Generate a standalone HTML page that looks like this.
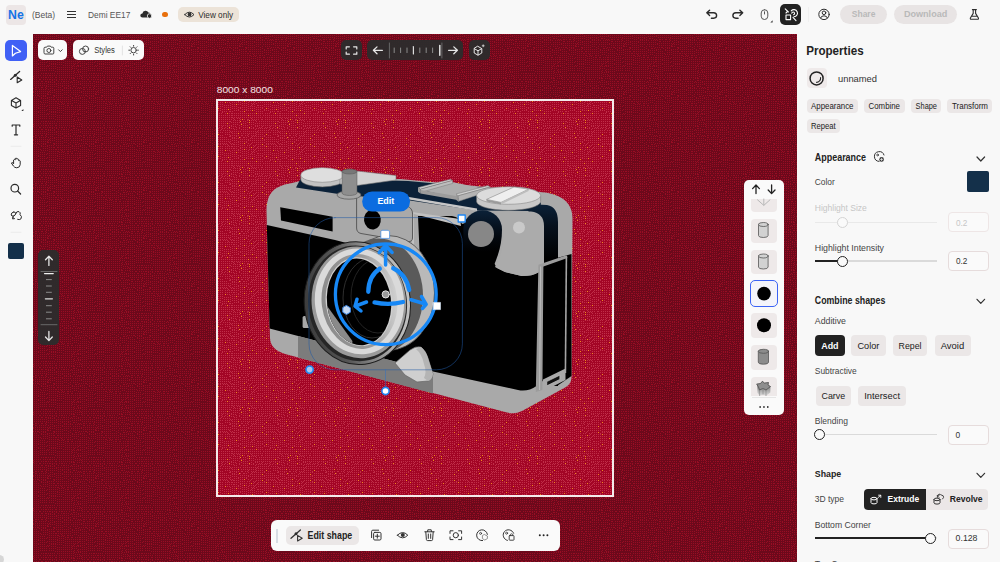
<!DOCTYPE html>
<html><head><meta charset="utf-8"><title>Ne (Beta)</title>
<style>
*{box-sizing:border-box;margin:0;padding:0}
html,body{width:1000px;height:562px;overflow:hidden;background:#f8f8f8;font-family:"Liberation Sans",sans-serif;color:#222}
#top{position:absolute;left:0;top:0;width:1000px;height:34.4px;background:#f8f8f8}
#left{position:absolute;left:0;top:34px;width:33.1px;height:528px;background:#f8f8f8}
#canvas{position:absolute;left:33.1px;top:34.4px;width:764px;height:528px;background:#820c22;overflow:hidden}
#right{position:absolute;left:797px;top:34.4px;width:203px;height:528px;background:#f8f8f8}
.box{position:absolute}
svg{position:absolute;left:0;top:0;overflow:visible}
svg text{font-family:"Liberation Sans",sans-serif;white-space:pre}
</style></head><body>
<div id="top"></div><div id="left"></div><div id="canvas"></div><div id="right"></div>
<svg id="bg" width="1000" height="562" viewBox="0 0 1000 562" shape-rendering="crispEdges">
<defs>
<pattern id="pBg" width="48" height="48" patternUnits="userSpaceOnUse"><rect width="48" height="48" fill="#6c091b"/><path d="M0 18h1v1h-1zM0 25h1v1h-1zM0 29h1v1h-1zM0 33h1v1h-1zM0 34h1v1h-1zM0 36h1v1h-1zM0 38h1v1h-1zM0 41h1v1h-1zM0 44h1v1h-1zM0 46h1v1h-1zM1 1h1v1h-1zM1 3h1v1h-1zM1 5h1v1h-1zM1 7h1v1h-1zM1 9h1v1h-1zM1 11h1v1h-1zM1 13h1v1h-1zM1 15h1v1h-1zM1 17h1v1h-1zM1 20h1v1h-1zM1 22h1v1h-1zM1 27h1v1h-1zM1 31h1v1h-1zM1 43h1v1h-1zM2 25h1v1h-1zM2 27h1v1h-1zM2 29h1v1h-1zM2 31h1v1h-1zM2 33h1v1h-1zM2 34h1v1h-1zM2 36h1v1h-1zM2 38h1v1h-1zM2 40h1v1h-1zM2 42h1v1h-1zM2 44h1v1h-1zM2 46h1v1h-1zM3 1h1v1h-1zM3 3h1v1h-1zM3 5h1v1h-1zM3 7h1v1h-1zM3 9h1v1h-1zM3 11h1v1h-1zM3 13h1v1h-1zM3 15h1v1h-1zM3 16h1v1h-1zM3 18h1v1h-1zM3 20h1v1h-1zM3 22h1v1h-1zM4 25h1v1h-1zM4 27h1v1h-1zM4 29h1v1h-1zM4 31h1v1h-1zM4 32h1v1h-1zM4 34h1v1h-1zM4 36h1v1h-1zM4 38h1v1h-1zM4 40h1v1h-1zM4 42h1v1h-1zM4 44h1v1h-1zM5 1h1v1h-1zM5 3h1v1h-1zM5 5h1v1h-1zM5 7h1v1h-1zM5 9h1v1h-1zM5 11h1v1h-1zM5 13h1v1h-1zM5 15h1v1h-1zM5 16h1v1h-1zM5 18h1v1h-1zM5 20h1v1h-1zM5 22h1v1h-1zM5 47h1v1h-1zM6 0h1v1h-1zM6 3h1v1h-1zM6 25h1v1h-1zM6 27h1v1h-1zM6 31h1v1h-1zM6 33h1v1h-1zM6 34h1v1h-1zM6 36h1v1h-1zM6 38h1v1h-1zM6 41h1v1h-1zM6 42h1v1h-1zM6 44h1v1h-1zM6 47h1v1h-1zM7 5h1v1h-1zM7 7h1v1h-1zM7 9h1v1h-1zM7 11h1v1h-1zM7 13h1v1h-1zM7 15h1v1h-1zM7 16h1v1h-1zM7 18h1v1h-1zM7 20h1v1h-1zM7 23h1v1h-1zM7 29h1v1h-1zM8 1h1v1h-1zM8 5h1v1h-1zM8 27h1v1h-1zM8 29h1v1h-1zM8 31h1v1h-1zM8 32h1v1h-1zM8 35h1v1h-1zM8 36h1v1h-1zM8 38h1v1h-1zM8 41h1v1h-1zM8 43h1v1h-1zM8 45h1v1h-1zM8 47h1v1h-1zM9 3h1v1h-1zM9 7h1v1h-1zM9 9h1v1h-1zM9 11h1v1h-1zM9 12h1v1h-1zM9 14h1v1h-1zM9 16h1v1h-1zM9 19h1v1h-1zM9 21h1v1h-1zM9 23h1v1h-1zM9 25h1v1h-1zM10 1h1v1h-1zM10 3h1v1h-1zM10 5h1v1h-1zM10 7h1v1h-1zM10 33h1v1h-1zM10 35h1v1h-1zM10 37h1v1h-1zM10 39h1v1h-1zM10 41h1v1h-1zM10 43h1v1h-1zM10 45h1v1h-1zM10 47h1v1h-1zM11 8h1v1h-1zM11 10h1v1h-1zM11 12h1v1h-1zM11 14h1v1h-1zM11 16h1v1h-1zM11 19h1v1h-1zM11 21h1v1h-1zM11 23h1v1h-1zM11 25h1v1h-1zM11 27h1v1h-1zM11 29h1v1h-1zM11 31h1v1h-1zM12 1h1v1h-1zM12 3h1v1h-1zM12 5h1v1h-1zM12 35h1v1h-1zM12 37h1v1h-1zM12 39h1v1h-1zM12 41h1v1h-1zM12 43h1v1h-1zM12 45h1v1h-1zM12 47h1v1h-1zM13 6h1v1h-1zM13 8h1v1h-1zM13 10h1v1h-1zM13 12h1v1h-1zM13 14h1v1h-1zM13 16h1v1h-1zM13 19h1v1h-1zM13 21h1v1h-1zM13 23h1v1h-1zM13 25h1v1h-1zM13 27h1v1h-1zM13 29h1v1h-1zM13 31h1v1h-1zM13 33h1v1h-1zM14 1h1v1h-1zM14 3h1v1h-1zM14 5h1v1h-1zM14 7h1v1h-1zM14 31h1v1h-1zM14 35h1v1h-1zM14 37h1v1h-1zM14 38h1v1h-1zM14 41h1v1h-1zM14 42h1v1h-1zM14 45h1v1h-1zM14 47h1v1h-1zM15 8h1v1h-1zM15 10h1v1h-1zM15 12h1v1h-1zM15 14h1v1h-1zM15 17h1v1h-1zM15 19h1v1h-1zM15 21h1v1h-1zM15 23h1v1h-1zM15 25h1v1h-1zM15 27h1v1h-1zM15 29h1v1h-1zM15 33h1v1h-1zM16 1h1v1h-1zM16 3h1v1h-1zM16 5h1v1h-1zM16 7h1v1h-1zM16 31h1v1h-1zM16 33h1v1h-1zM16 35h1v1h-1zM16 37h1v1h-1zM16 39h1v1h-1zM16 40h1v1h-1zM16 42h1v1h-1zM16 44h1v1h-1zM16 46h1v1h-1zM17 9h1v1h-1zM17 11h1v1h-1zM17 13h1v1h-1zM17 15h1v1h-1zM17 17h1v1h-1zM17 19h1v1h-1zM17 21h1v1h-1zM17 23h1v1h-1zM17 25h1v1h-1zM17 27h1v1h-1zM17 29h1v1h-1zM18 1h1v1h-1zM18 3h1v1h-1zM18 5h1v1h-1zM18 31h1v1h-1zM18 33h1v1h-1zM18 35h1v1h-1zM18 37h1v1h-1zM18 39h1v1h-1zM18 40h1v1h-1zM18 42h1v1h-1zM18 44h1v1h-1zM18 46h1v1h-1zM19 7h1v1h-1zM19 9h1v1h-1zM19 11h1v1h-1zM19 13h1v1h-1zM19 15h1v1h-1zM19 17h1v1h-1zM19 19h1v1h-1zM19 21h1v1h-1zM19 23h1v1h-1zM19 25h1v1h-1zM19 27h1v1h-1zM19 29h1v1h-1zM20 1h1v1h-1zM20 3h1v1h-1zM20 5h1v1h-1zM20 7h1v1h-1zM20 9h1v1h-1zM20 33h1v1h-1zM20 35h1v1h-1zM20 37h1v1h-1zM20 38h1v1h-1zM20 40h1v1h-1zM20 42h1v1h-1zM20 44h1v1h-1zM20 47h1v1h-1zM21 11h1v1h-1zM21 13h1v1h-1zM21 15h1v1h-1zM21 17h1v1h-1zM21 19h1v1h-1zM21 21h1v1h-1zM21 23h1v1h-1zM21 25h1v1h-1zM21 27h1v1h-1zM21 29h1v1h-1zM21 31h1v1h-1zM22 0h1v1h-1zM22 3h1v1h-1zM22 5h1v1h-1zM22 7h1v1h-1zM22 34h1v1h-1zM22 37h1v1h-1zM22 39h1v1h-1zM22 40h1v1h-1zM22 42h1v1h-1zM22 46h1v1h-1zM23 9h1v1h-1zM23 11h1v1h-1zM23 13h1v1h-1zM23 15h1v1h-1zM23 17h1v1h-1zM23 19h1v1h-1zM23 21h1v1h-1zM23 23h1v1h-1zM23 25h1v1h-1zM23 27h1v1h-1zM23 29h1v1h-1zM23 30h1v1h-1zM23 33h1v1h-1zM23 44h1v1h-1zM24 1h1v1h-1zM24 2h1v1h-1zM24 4h1v1h-1zM24 7h1v1h-1zM24 9h1v1h-1zM24 18h1v1h-1zM24 20h1v1h-1zM24 34h1v1h-1zM24 36h1v1h-1zM24 40h1v1h-1zM25 11h1v1h-1zM25 13h1v1h-1zM25 15h1v1h-1zM25 17h1v1h-1zM25 23h1v1h-1zM25 25h1v1h-1zM25 27h1v1h-1zM25 29h1v1h-1zM25 30h1v1h-1zM25 32h1v1h-1zM25 38h1v1h-1zM25 42h1v1h-1zM25 44h1v1h-1zM25 46h1v1h-1zM26 2h1v1h-1zM26 4h1v1h-1zM26 6h1v1h-1zM26 16h1v1h-1zM26 18h1v1h-1zM26 20h1v1h-1zM26 22h1v1h-1zM26 24h1v1h-1zM26 30h1v1h-1zM26 32h1v1h-1zM26 34h1v1h-1zM26 36h1v1h-1zM26 38h1v1h-1zM27 0h1v1h-1zM27 9h1v1h-1zM27 11h1v1h-1zM27 13h1v1h-1zM27 15h1v1h-1zM27 26h1v1h-1zM27 28h1v1h-1zM27 40h1v1h-1zM27 42h1v1h-1zM27 44h1v1h-1zM27 46h1v1h-1zM28 0h1v1h-1zM28 2h1v1h-1zM28 4h1v1h-1zM28 6h1v1h-1zM28 18h1v1h-1zM28 20h1v1h-1zM28 24h1v1h-1zM28 32h1v1h-1zM28 34h1v1h-1zM28 36h1v1h-1zM28 38h1v1h-1zM29 9h1v1h-1zM29 11h1v1h-1zM29 13h1v1h-1zM29 15h1v1h-1zM29 17h1v1h-1zM29 22h1v1h-1zM29 26h1v1h-1zM29 28h1v1h-1zM29 30h1v1h-1zM29 40h1v1h-1zM29 42h1v1h-1zM29 44h1v1h-1zM29 46h1v1h-1zM30 0h1v1h-1zM30 2h1v1h-1zM30 4h1v1h-1zM30 7h1v1h-1zM30 14h1v1h-1zM30 17h1v1h-1zM30 18h1v1h-1zM30 21h1v1h-1zM30 23h1v1h-1zM30 24h1v1h-1zM30 33h1v1h-1zM30 34h1v1h-1zM30 36h1v1h-1zM30 39h1v1h-1zM31 9h1v1h-1zM31 11h1v1h-1zM31 13h1v1h-1zM31 26h1v1h-1zM31 28h1v1h-1zM31 30h1v1h-1zM31 40h1v1h-1zM31 42h1v1h-1zM31 44h1v1h-1zM31 47h1v1h-1zM32 1h1v1h-1zM32 2h1v1h-1zM32 5h1v1h-1zM32 7h1v1h-1zM32 9h1v1h-1zM32 11h1v1h-1zM32 13h1v1h-1zM32 15h1v1h-1zM32 17h1v1h-1zM32 18h1v1h-1zM32 21h1v1h-1zM32 23h1v1h-1zM32 24h1v1h-1zM32 27h1v1h-1zM32 33h1v1h-1zM32 35h1v1h-1zM32 36h1v1h-1zM32 39h1v1h-1zM33 28h1v1h-1zM33 30h1v1h-1zM33 40h1v1h-1zM33 43h1v1h-1zM33 44h1v1h-1zM33 47h1v1h-1zM34 1h1v1h-1zM34 3h1v1h-1zM34 5h1v1h-1zM34 7h1v1h-1zM34 9h1v1h-1zM34 11h1v1h-1zM34 13h1v1h-1zM34 15h1v1h-1zM34 17h1v1h-1zM34 19h1v1h-1zM34 21h1v1h-1zM34 23h1v1h-1zM34 25h1v1h-1zM34 27h1v1h-1zM34 29h1v1h-1zM34 31h1v1h-1zM34 33h1v1h-1zM34 35h1v1h-1zM34 37h1v1h-1zM35 39h1v1h-1zM35 41h1v1h-1zM35 43h1v1h-1zM35 45h1v1h-1zM35 47h1v1h-1zM36 1h1v1h-1zM36 3h1v1h-1zM36 5h1v1h-1zM36 7h1v1h-1zM36 9h1v1h-1zM36 11h1v1h-1zM36 13h1v1h-1zM36 15h1v1h-1zM36 17h1v1h-1zM36 19h1v1h-1zM36 21h1v1h-1zM36 23h1v1h-1zM36 25h1v1h-1zM36 27h1v1h-1zM36 29h1v1h-1zM36 31h1v1h-1zM36 33h1v1h-1zM36 35h1v1h-1zM36 37h1v1h-1zM36 39h1v1h-1zM36 41h1v1h-1zM37 43h1v1h-1zM37 45h1v1h-1zM37 47h1v1h-1zM38 3h1v1h-1zM38 5h1v1h-1zM38 7h1v1h-1zM38 9h1v1h-1zM38 11h1v1h-1zM38 12h1v1h-1zM38 15h1v1h-1zM38 16h1v1h-1zM38 19h1v1h-1zM38 21h1v1h-1zM38 23h1v1h-1zM38 25h1v1h-1zM38 27h1v1h-1zM38 29h1v1h-1zM38 33h1v1h-1zM38 35h1v1h-1zM38 37h1v1h-1zM38 39h1v1h-1zM38 47h1v1h-1zM39 0h1v1h-1zM39 31h1v1h-1zM39 41h1v1h-1zM39 43h1v1h-1zM39 45h1v1h-1zM40 5h1v1h-1zM40 8h1v1h-1zM40 10h1v1h-1zM40 12h1v1h-1zM40 14h1v1h-1zM40 16h1v1h-1zM40 18h1v1h-1zM40 20h1v1h-1zM40 22h1v1h-1zM40 27h1v1h-1zM40 31h1v1h-1zM40 35h1v1h-1zM40 37h1v1h-1zM41 1h1v1h-1zM41 2h1v1h-1zM41 6h1v1h-1zM41 25h1v1h-1zM41 29h1v1h-1zM41 33h1v1h-1zM41 39h1v1h-1zM41 41h1v1h-1zM41 43h1v1h-1zM41 45h1v1h-1zM41 47h1v1h-1zM42 8h1v1h-1zM42 10h1v1h-1zM42 12h1v1h-1zM42 14h1v1h-1zM42 16h1v1h-1zM42 18h1v1h-1zM42 20h1v1h-1zM42 22h1v1h-1zM42 33h1v1h-1zM42 35h1v1h-1zM42 37h1v1h-1zM42 39h1v1h-1zM43 0h1v1h-1zM43 2h1v1h-1zM43 4h1v1h-1zM43 6h1v1h-1zM43 25h1v1h-1zM43 27h1v1h-1zM43 29h1v1h-1zM43 31h1v1h-1zM43 41h1v1h-1zM43 43h1v1h-1zM43 45h1v1h-1zM43 47h1v1h-1zM44 8h1v1h-1zM44 10h1v1h-1zM44 12h1v1h-1zM44 14h1v1h-1zM44 16h1v1h-1zM44 18h1v1h-1zM44 20h1v1h-1zM44 22h1v1h-1zM44 35h1v1h-1zM44 37h1v1h-1zM45 0h1v1h-1zM45 2h1v1h-1zM45 4h1v1h-1zM45 6h1v1h-1zM45 25h1v1h-1zM45 27h1v1h-1zM45 29h1v1h-1zM45 31h1v1h-1zM45 33h1v1h-1zM45 39h1v1h-1zM45 41h1v1h-1zM45 43h1v1h-1zM45 45h1v1h-1zM45 47h1v1h-1zM46 10h1v1h-1zM46 14h1v1h-1zM46 18h1v1h-1zM46 20h1v1h-1zM46 22h1v1h-1zM46 25h1v1h-1zM46 29h1v1h-1zM46 33h1v1h-1zM46 35h1v1h-1zM46 37h1v1h-1zM46 38h1v1h-1zM46 40h1v1h-1zM47 1h1v1h-1zM47 2h1v1h-1zM47 4h1v1h-1zM47 6h1v1h-1zM47 9h1v1h-1zM47 13h1v1h-1zM47 17h1v1h-1zM47 27h1v1h-1zM47 31h1v1h-1zM47 43h1v1h-1zM47 45h1v1h-1zM47 46h1v1h-1z" fill="#980d24"/></pattern>
<pattern id="pArt" width="48" height="48" patternUnits="userSpaceOnUse"><rect width="48" height="48" fill="#a30525"/><path d="M0 1h1v1h-1zM0 3h1v1h-1zM0 4h1v1h-1zM0 6h1v1h-1zM0 8h1v1h-1zM0 11h1v1h-1zM0 12h1v1h-1zM0 15h1v1h-1zM0 17h1v1h-1zM0 19h1v1h-1zM0 21h1v1h-1zM0 23h1v1h-1zM0 35h1v1h-1zM0 41h1v1h-1zM0 43h1v1h-1zM0 45h1v1h-1zM0 47h1v1h-1zM1 27h1v1h-1zM1 30h1v1h-1zM1 33h1v1h-1zM1 37h1v1h-1zM1 39h1v1h-1zM2 1h1v1h-1zM2 3h1v1h-1zM2 5h1v1h-1zM2 7h1v1h-1zM2 9h1v1h-1zM2 11h1v1h-1zM2 13h1v1h-1zM2 15h1v1h-1zM2 17h1v1h-1zM2 19h1v1h-1zM2 21h1v1h-1zM2 39h1v1h-1zM2 43h1v1h-1zM2 45h1v1h-1zM2 47h1v1h-1zM3 25h1v1h-1zM3 27h1v1h-1zM3 29h1v1h-1zM3 31h1v1h-1zM3 33h1v1h-1zM3 35h1v1h-1zM3 37h1v1h-1zM3 41h1v1h-1zM4 1h1v1h-1zM4 3h1v1h-1zM4 7h1v1h-1zM4 9h1v1h-1zM4 11h1v1h-1zM4 13h1v1h-1zM4 17h1v1h-1zM4 19h1v1h-1zM4 21h1v1h-1zM4 23h1v1h-1zM4 41h1v1h-1zM4 43h1v1h-1zM4 45h1v1h-1zM5 25h1v1h-1zM5 27h1v1h-1zM5 29h1v1h-1zM5 31h1v1h-1zM5 33h1v1h-1zM5 35h1v1h-1zM5 37h1v1h-1zM5 39h1v1h-1zM6 3h1v1h-1zM6 5h1v1h-1zM6 7h1v1h-1zM6 9h1v1h-1zM6 11h1v1h-1zM6 13h1v1h-1zM6 14h1v1h-1zM6 17h1v1h-1zM6 19h1v1h-1zM6 21h1v1h-1zM6 41h1v1h-1zM6 43h1v1h-1zM6 45h1v1h-1zM6 46h1v1h-1zM7 1h1v1h-1zM7 23h1v1h-1zM7 24h1v1h-1zM7 26h1v1h-1zM7 29h1v1h-1zM7 31h1v1h-1zM7 33h1v1h-1zM7 35h1v1h-1zM7 37h1v1h-1zM7 39h1v1h-1zM8 6h1v1h-1zM8 8h1v1h-1zM8 10h1v1h-1zM8 12h1v1h-1zM8 14h1v1h-1zM8 17h1v1h-1zM8 21h1v1h-1zM8 23h1v1h-1zM8 38h1v1h-1zM8 40h1v1h-1zM8 43h1v1h-1zM8 44h1v1h-1zM8 47h1v1h-1zM9 1h1v1h-1zM9 3h1v1h-1zM9 5h1v1h-1zM9 28h1v1h-1zM9 32h1v1h-1zM9 35h1v1h-1zM9 37h1v1h-1zM10 0h1v1h-1zM10 10h1v1h-1zM10 12h1v1h-1zM10 14h1v1h-1zM10 17h1v1h-1zM10 19h1v1h-1zM10 21h1v1h-1zM10 42h1v1h-1zM10 44h1v1h-1zM11 5h1v1h-1zM11 7h1v1h-1zM11 9h1v1h-1zM11 22h1v1h-1zM11 24h1v1h-1zM11 26h1v1h-1zM11 28h1v1h-1zM11 30h1v1h-1zM11 32h1v1h-1zM11 35h1v1h-1zM11 37h1v1h-1zM11 39h1v1h-1zM11 41h1v1h-1zM11 47h1v1h-1zM12 8h1v1h-1zM12 10h1v1h-1zM12 12h1v1h-1zM12 17h1v1h-1zM12 19h1v1h-1zM12 21h1v1h-1zM12 23h1v1h-1zM12 40h1v1h-1zM12 42h1v1h-1zM12 44h1v1h-1zM12 46h1v1h-1zM13 1h1v1h-1zM13 3h1v1h-1zM13 5h1v1h-1zM13 7h1v1h-1zM13 24h1v1h-1zM13 26h1v1h-1zM13 28h1v1h-1zM13 31h1v1h-1zM13 32h1v1h-1zM13 35h1v1h-1zM13 37h1v1h-1zM13 39h1v1h-1zM14 2h1v1h-1zM14 6h1v1h-1zM14 8h1v1h-1zM14 10h1v1h-1zM14 12h1v1h-1zM14 14h1v1h-1zM14 17h1v1h-1zM14 19h1v1h-1zM14 21h1v1h-1zM14 23h1v1h-1zM14 40h1v1h-1zM14 42h1v1h-1zM14 44h1v1h-1zM14 46h1v1h-1zM15 1h1v1h-1zM15 5h1v1h-1zM15 24h1v1h-1zM15 27h1v1h-1zM15 29h1v1h-1zM15 30h1v1h-1zM15 33h1v1h-1zM15 35h1v1h-1zM15 37h1v1h-1zM15 39h1v1h-1zM16 0h1v1h-1zM16 4h1v1h-1zM16 7h1v1h-1zM16 11h1v1h-1zM16 13h1v1h-1zM16 15h1v1h-1zM16 19h1v1h-1zM16 21h1v1h-1zM16 23h1v1h-1zM16 25h1v1h-1zM16 32h1v1h-1zM16 36h1v1h-1zM16 38h1v1h-1zM16 40h1v1h-1zM16 42h1v1h-1zM16 44h1v1h-1zM16 46h1v1h-1zM17 3h1v1h-1zM17 9h1v1h-1zM17 27h1v1h-1zM17 29h1v1h-1zM17 30h1v1h-1zM17 35h1v1h-1zM18 0h1v1h-1zM18 2h1v1h-1zM18 4h1v1h-1zM18 6h1v1h-1zM18 9h1v1h-1zM18 11h1v1h-1zM18 13h1v1h-1zM18 15h1v1h-1zM18 17h1v1h-1zM18 19h1v1h-1zM18 21h1v1h-1zM18 23h1v1h-1zM18 32h1v1h-1zM18 34h1v1h-1zM18 36h1v1h-1zM18 38h1v1h-1zM18 40h1v1h-1zM18 42h1v1h-1zM18 44h1v1h-1zM18 46h1v1h-1zM19 25h1v1h-1zM19 27h1v1h-1zM19 29h1v1h-1zM19 31h1v1h-1zM20 0h1v1h-1zM20 2h1v1h-1zM20 4h1v1h-1zM20 6h1v1h-1zM20 9h1v1h-1zM20 11h1v1h-1zM20 13h1v1h-1zM20 15h1v1h-1zM20 17h1v1h-1zM20 19h1v1h-1zM20 21h1v1h-1zM20 32h1v1h-1zM20 34h1v1h-1zM20 36h1v1h-1zM20 38h1v1h-1zM20 40h1v1h-1zM20 42h1v1h-1zM20 44h1v1h-1zM20 46h1v1h-1zM21 23h1v1h-1zM21 25h1v1h-1zM21 27h1v1h-1zM21 29h1v1h-1zM21 31h1v1h-1zM22 2h1v1h-1zM22 4h1v1h-1zM22 6h1v1h-1zM22 9h1v1h-1zM22 11h1v1h-1zM22 12h1v1h-1zM22 15h1v1h-1zM22 17h1v1h-1zM22 21h1v1h-1zM22 23h1v1h-1zM22 30h1v1h-1zM22 32h1v1h-1zM22 34h1v1h-1zM22 36h1v1h-1zM22 38h1v1h-1zM22 40h1v1h-1zM22 44h1v1h-1zM22 46h1v1h-1zM23 19h1v1h-1zM23 25h1v1h-1zM23 27h1v1h-1zM23 29h1v1h-1zM24 1h1v1h-1zM24 2h1v1h-1zM24 4h1v1h-1zM24 6h1v1h-1zM24 8h1v1h-1zM24 10h1v1h-1zM24 13h1v1h-1zM24 14h1v1h-1zM24 32h1v1h-1zM24 34h1v1h-1zM24 36h1v1h-1zM24 39h1v1h-1zM24 40h1v1h-1zM24 43h1v1h-1zM24 44h1v1h-1zM24 46h1v1h-1zM25 17h1v1h-1zM25 19h1v1h-1zM25 21h1v1h-1zM25 23h1v1h-1zM25 25h1v1h-1zM25 27h1v1h-1zM25 29h1v1h-1zM25 31h1v1h-1zM26 0h1v1h-1zM26 4h1v1h-1zM26 6h1v1h-1zM26 8h1v1h-1zM26 10h1v1h-1zM26 14h1v1h-1zM26 32h1v1h-1zM26 34h1v1h-1zM26 36h1v1h-1zM26 41h1v1h-1zM26 43h1v1h-1zM26 45h1v1h-1zM26 47h1v1h-1zM27 17h1v1h-1zM27 19h1v1h-1zM27 21h1v1h-1zM27 23h1v1h-1zM27 25h1v1h-1zM27 27h1v1h-1zM27 29h1v1h-1zM27 31h1v1h-1zM28 0h1v1h-1zM28 2h1v1h-1zM28 4h1v1h-1zM28 6h1v1h-1zM28 8h1v1h-1zM28 10h1v1h-1zM28 12h1v1h-1zM28 14h1v1h-1zM28 34h1v1h-1zM28 36h1v1h-1zM28 39h1v1h-1zM28 41h1v1h-1zM28 43h1v1h-1zM28 45h1v1h-1zM28 47h1v1h-1zM29 17h1v1h-1zM29 19h1v1h-1zM29 21h1v1h-1zM29 23h1v1h-1zM29 25h1v1h-1zM29 27h1v1h-1zM29 29h1v1h-1zM29 31h1v1h-1zM29 33h1v1h-1zM30 2h1v1h-1zM30 4h1v1h-1zM30 6h1v1h-1zM30 8h1v1h-1zM30 10h1v1h-1zM30 13h1v1h-1zM30 15h1v1h-1zM30 16h1v1h-1zM30 30h1v1h-1zM30 32h1v1h-1zM30 36h1v1h-1zM30 39h1v1h-1zM30 41h1v1h-1zM30 43h1v1h-1zM30 45h1v1h-1zM30 47h1v1h-1zM31 0h1v1h-1zM31 19h1v1h-1zM31 21h1v1h-1zM31 23h1v1h-1zM31 25h1v1h-1zM31 27h1v1h-1zM31 29h1v1h-1zM31 34h1v1h-1zM32 9h1v1h-1zM32 11h1v1h-1zM32 13h1v1h-1zM32 15h1v1h-1zM32 32h1v1h-1zM32 41h1v1h-1zM32 43h1v1h-1zM32 45h1v1h-1zM32 47h1v1h-1zM33 0h1v1h-1zM33 2h1v1h-1zM33 4h1v1h-1zM33 17h1v1h-1zM33 19h1v1h-1zM33 21h1v1h-1zM33 23h1v1h-1zM33 25h1v1h-1zM33 27h1v1h-1zM33 29h1v1h-1zM33 31h1v1h-1zM33 34h1v1h-1zM33 36h1v1h-1zM33 38h1v1h-1zM34 9h1v1h-1zM34 11h1v1h-1zM34 13h1v1h-1zM34 15h1v1h-1zM34 41h1v1h-1zM34 43h1v1h-1zM34 45h1v1h-1zM34 47h1v1h-1zM35 0h1v1h-1zM35 2h1v1h-1zM35 4h1v1h-1zM35 6h1v1h-1zM35 19h1v1h-1zM35 21h1v1h-1zM35 23h1v1h-1zM35 25h1v1h-1zM35 29h1v1h-1zM35 30h1v1h-1zM35 32h1v1h-1zM35 34h1v1h-1zM35 36h1v1h-1zM35 38h1v1h-1zM36 1h1v1h-1zM36 9h1v1h-1zM36 11h1v1h-1zM36 43h1v1h-1zM36 45h1v1h-1zM37 2h1v1h-1zM37 4h1v1h-1zM37 6h1v1h-1zM37 15h1v1h-1zM37 17h1v1h-1zM37 19h1v1h-1zM37 21h1v1h-1zM37 23h1v1h-1zM37 25h1v1h-1zM37 27h1v1h-1zM37 29h1v1h-1zM37 32h1v1h-1zM37 34h1v1h-1zM37 36h1v1h-1zM37 38h1v1h-1zM37 40h1v1h-1zM37 46h1v1h-1zM38 7h1v1h-1zM38 9h1v1h-1zM38 11h1v1h-1zM38 13h1v1h-1zM38 15h1v1h-1zM38 25h1v1h-1zM38 35h1v1h-1zM38 39h1v1h-1zM38 40h1v1h-1zM38 43h1v1h-1zM38 45h1v1h-1zM38 47h1v1h-1zM39 0h1v1h-1zM39 2h1v1h-1zM39 4h1v1h-1zM39 17h1v1h-1zM39 19h1v1h-1zM39 21h1v1h-1zM39 23h1v1h-1zM39 26h1v1h-1zM39 29h1v1h-1zM39 30h1v1h-1zM39 32h1v1h-1zM39 36h1v1h-1zM40 2h1v1h-1zM40 6h1v1h-1zM40 8h1v1h-1zM40 10h1v1h-1zM40 12h1v1h-1zM40 15h1v1h-1zM40 17h1v1h-1zM40 19h1v1h-1zM40 21h1v1h-1zM40 35h1v1h-1zM40 37h1v1h-1zM40 39h1v1h-1zM40 41h1v1h-1zM40 42h1v1h-1zM40 44h1v1h-1zM40 47h1v1h-1zM41 0h1v1h-1zM41 4h1v1h-1zM41 22h1v1h-1zM41 24h1v1h-1zM41 26h1v1h-1zM41 28h1v1h-1zM41 30h1v1h-1zM41 32h1v1h-1zM42 0h1v1h-1zM42 2h1v1h-1zM42 4h1v1h-1zM42 6h1v1h-1zM42 8h1v1h-1zM42 10h1v1h-1zM42 12h1v1h-1zM42 14h1v1h-1zM42 17h1v1h-1zM42 19h1v1h-1zM42 21h1v1h-1zM42 23h1v1h-1zM42 33h1v1h-1zM42 35h1v1h-1zM42 37h1v1h-1zM42 39h1v1h-1zM42 41h1v1h-1zM42 42h1v1h-1zM42 44h1v1h-1zM42 46h1v1h-1zM43 24h1v1h-1zM43 26h1v1h-1zM43 28h1v1h-1zM43 30h1v1h-1zM44 0h1v1h-1zM44 2h1v1h-1zM44 4h1v1h-1zM44 6h1v1h-1zM44 10h1v1h-1zM44 12h1v1h-1zM44 14h1v1h-1zM44 17h1v1h-1zM44 19h1v1h-1zM44 21h1v1h-1zM44 31h1v1h-1zM44 33h1v1h-1zM44 35h1v1h-1zM44 37h1v1h-1zM44 39h1v1h-1zM44 40h1v1h-1zM44 42h1v1h-1zM44 44h1v1h-1zM44 46h1v1h-1zM45 22h1v1h-1zM45 24h1v1h-1zM45 26h1v1h-1zM45 28h1v1h-1zM46 0h1v1h-1zM46 2h1v1h-1zM46 5h1v1h-1zM46 6h1v1h-1zM46 8h1v1h-1zM46 11h1v1h-1zM46 13h1v1h-1zM46 14h1v1h-1zM46 17h1v1h-1zM46 19h1v1h-1zM46 21h1v1h-1zM46 35h1v1h-1zM46 39h1v1h-1zM46 42h1v1h-1zM46 45h1v1h-1zM46 46h1v1h-1zM47 22h1v1h-1zM47 24h1v1h-1zM47 26h1v1h-1zM47 29h1v1h-1zM47 31h1v1h-1zM47 32h1v1h-1z" fill="#c02e48"/><path d="M1 28h1v1h-1zM46 37h1v1h-1zM26 12h1v1h-1zM12 14h1v1h-1zM35 17h1v1h-1zM16 17h1v1h-1zM4 5h1v1h-1zM47 41h1v1h-1zM44 8h1v1h-1zM11 3h1v1h-1zM9 26h1v1h-1zM8 19h1v1h-1zM36 13h1v1h-1zM4 15h1v1h-1zM33 6h1v1h-1zM22 0h1v1h-1zM0 25h1v1h-1zM9 31h1v1h-1zM9 24h1v1h-1zM26 2h1v1h-1zM22 42h1v1h-1zM4 47h1v1h-1zM26 38h1v1h-1zM35 27h1v1h-1zM37 31h1v1h-1zM2 23h1v1h-1z" fill="#f08a1c"/></pattern>
</defs>
<rect x="33" y="34" width="764" height="528" fill="url(#pBg)"/>
<rect x="217" y="100" width="396" height="396" fill="url(#pArt)"/>
</svg>
<div class="box" style="left:6px;top:5px;width:20px;height:19.5px;background:#ece6e6;border-radius:4px;"></div>
<div class="box" style="left:67px;top:11px;width:9px;height:1.3px;background:#333;border-radius:0px;box-shadow:0 3px 0 #333,0 6px 0 #333"></div>
<div class="box" style="left:162px;top:11.8px;width:5.6px;height:5.6px;background:#e8700d;border-radius:3px;"></div>
<div class="box" style="left:178px;top:7px;width:61px;height:15px;background:#ece3d8;border-radius:5px;"></div>
<div class="box" style="left:780px;top:4px;width:21px;height:21px;background:#222;border-radius:5px;"></div>
<div class="box" style="left:807.5px;top:7px;width:1px;height:15px;background:#f0f0f0;border-radius:0px;"></div>
<div class="box" style="left:840.3px;top:4.6px;width:46.5px;height:19.6px;background:#e8e4e4;border-radius:10px;"></div>
<div class="box" style="left:893.7px;top:4.6px;width:63.5px;height:19.6px;background:#e8e4e4;border-radius:10px;"></div>
<div class="box" style="left:5.2px;top:39.8px;width:21.8px;height:21.2px;background:#4060f5;border-radius:5px;"></div>
<div class="box" style="left:8px;top:243px;width:15.7px;height:15.8px;background:#14304a;border-radius:2px;"></div>
<div class="box" style="left:806.6px;top:68.4px;width:20.8px;height:19.2px;background:#efeaea;border-radius:4px;"></div>
<div class="box" style="left:807px;top:98.6px;width:51px;height:14.4px;background:#ebe7e7;border-radius:4px;"></div>
<div class="box" style="left:864px;top:98.6px;width:40.60000000000002px;height:14.4px;background:#ebe7e7;border-radius:4px;"></div>
<div class="box" style="left:911px;top:98.6px;width:30.399999999999977px;height:14.4px;background:#ebe7e7;border-radius:4px;"></div>
<div class="box" style="left:947px;top:98.6px;width:45.39999999999998px;height:14.4px;background:#ebe7e7;border-radius:4px;"></div>
<div class="box" style="left:807px;top:119px;width:33px;height:14.4px;background:#ebe7e7;border-radius:4px;"></div>
<div class="box" style="left:967.4px;top:171.4px;width:21.4px;height:20.5px;background:#14304a;border-radius:2px;"></div>
<div class="box" style="left:814.8px;top:221.9px;width:122px;height:1.4px;background:#e9e9e9;border-radius:0px;"></div>
<div class="box" style="left:836.5px;top:217.1px;width:11px;height:11px;background:#fafafa;border-radius:6px;border:1.5px solid #d4d4d4;"></div>
<div class="box" style="left:948.2px;top:212.2px;width:40.6px;height:20px;background:#fafafa;border-radius:4px;border:1px solid #eee6e6;"></div>
<div class="box" style="left:814.8px;top:260.3px;width:122px;height:1.4px;background:#dadada;border-radius:0px;"></div>
<div class="box" style="left:814.8px;top:260px;width:27.200000000000045px;height:2px;background:#222;border-radius:0px;"></div>
<div class="box" style="left:836.5px;top:255.5px;width:11px;height:11px;background:#fafafa;border-radius:6px;border:1.5px solid #222;"></div>
<div class="box" style="left:948.2px;top:251.4px;width:40.6px;height:20px;background:#fafafa;border-radius:4px;border:1px solid #e6dcdc;"></div>
<div class="box" style="left:814.8px;top:434.0px;width:122px;height:1.4px;background:#dadada;border-radius:0px;"></div>
<div class="box" style="left:814.3px;top:429.2px;width:11px;height:11px;background:#fafafa;border-radius:6px;border:1.5px solid #222;"></div>
<div class="box" style="left:948.2px;top:425.2px;width:40.6px;height:20px;background:#fafafa;border-radius:4px;border:1px solid #e6dcdc;"></div>
<div class="box" style="left:814.8px;top:537.3px;width:122px;height:1.4px;background:#dadada;border-radius:0px;"></div>
<div class="box" style="left:814.8px;top:537px;width:115.20000000000005px;height:2px;background:#222;border-radius:0px;"></div>
<div class="box" style="left:925.0px;top:532.5px;width:11px;height:11px;background:#fafafa;border-radius:6px;border:1.5px solid #222;"></div>
<div class="box" style="left:948.2px;top:528.6px;width:40.6px;height:20px;background:#fafafa;border-radius:4px;border:1px solid #e6dcdc;"></div>
<div class="box" style="left:814.8px;top:335.2px;width:30.4px;height:20.8px;background:#222;border-radius:4px;"></div>
<div class="box" style="left:851.4px;top:335.2px;width:34.60000000000002px;height:20.8px;background:#ebe7e7;border-radius:4px;"></div>
<div class="box" style="left:892.7px;top:335.2px;width:34.69999999999993px;height:20.8px;background:#ebe7e7;border-radius:4px;"></div>
<div class="box" style="left:934.6px;top:335.2px;width:36.0px;height:20.8px;background:#ebe7e7;border-radius:4px;"></div>
<div class="box" style="left:815.9px;top:386.2px;width:35.5px;height:19.8px;background:#ebe7e7;border-radius:4px;"></div>
<div class="box" style="left:858px;top:386.2px;width:48px;height:19.8px;background:#ebe7e7;border-radius:4px;"></div>
<div class="box" style="left:864px;top:488.7px;width:61.8px;height:21.2px;background:#222;border-radius:0px;border-radius:4px 0 0 4px;"></div>
<div class="box" style="left:925.8px;top:488.7px;width:62.2px;height:21.2px;background:#ebe7e7;border-radius:0px;border-radius:0 4px 4px 0;"></div>
<div class="box" style="left:38.4px;top:40px;width:28.8px;height:20.4px;background:#fafafa;border-radius:5px;"></div>
<div class="box" style="left:73px;top:40px;width:71px;height:20.4px;background:#fafafa;border-radius:5px;"></div>
<div class="box" style="left:341px;top:40px;width:21px;height:20.4px;background:rgba(44,44,44,.95);border-radius:5px;"></div>
<div class="box" style="left:367.3px;top:40px;width:95.7px;height:20.4px;background:rgba(44,44,44,.95);border-radius:5px;"></div>
<div class="box" style="left:469px;top:40px;width:20.5px;height:20.4px;background:rgba(44,44,44,.95);border-radius:5px;"></div>
<div class="box" style="left:38.2px;top:250.2px;width:21.2px;height:94.8px;background:rgba(44,44,44,.95);border-radius:5px;"></div>
<div class="box" style="left:216px;top:99px;width:398px;height:398px;background:transparent;border-radius:0px;border:2px solid #f3eaea;"></div>
<div class="box" style="left:743.8px;top:180.4px;width:39.8px;height:234.8px;background:#fafafa;border-radius:5px;"></div>
<div class="box" style="left:751px;top:199px;width:26.2px;height:12.6px;background:#eee9e9;border-radius:0px;border-radius:0 0 4px 4px;"></div>
<div class="box" style="left:751px;top:218.5px;width:26.2px;height:24.4px;background:#eee9e9;border-radius:4px;"></div>
<div class="box" style="left:751px;top:249.9px;width:26.2px;height:24.4px;background:#eee9e9;border-radius:4px;"></div>
<div class="box" style="left:750.2px;top:280.4px;width:27.6px;height:26.4px;background:#f4f4fa;border-radius:5px;border:1.5px solid #3b63f5;"></div>
<div class="box" style="left:751px;top:313px;width:26.2px;height:25px;background:#eee9e9;border-radius:4px;"></div>
<div class="box" style="left:751px;top:345px;width:26.2px;height:24.6px;background:#eee9e9;border-radius:4px;"></div>
<div class="box" style="left:751px;top:376.6px;width:26.2px;height:19.6px;background:#eee9e9;border-radius:0px;border-radius:4px 4px 0 0;"></div>
<div class="box" style="left:752px;top:397.4px;width:24px;height:0.8px;background:#e6e6e6;border-radius:0px;"></div>
<div class="box" style="left:-5px;top:555px;width:9px;height:9px;background:#d6d6d6;border-radius:5px;"></div>
<div class="box" style="left:271px;top:520px;width:288.6px;height:31px;background:#fafafa;border-radius:6px;"></div>
<div class="box" style="left:276.4px;top:528.5px;width:1.2px;height:14px;background:#d8dde4;border-radius:0px;"></div>
<div class="box" style="left:285.8px;top:525.8px;width:72.8px;height:19.7px;background:#ebe7e7;border-radius:5px;"></div>
<svg id="art" width="1000" height="562" viewBox="0 0 1000 562">
<g id="camera" stroke-linejoin="round">
<!-- silhouette -->
<path d="M270 338 L266.5 212 C266.5 194 273 186.5 290 183.5 L300 181 L400 179 L545 192.5 C562 195 572.5 203 572.5 218 L571.5 378 Q571 384 566 387 L522 411 Q515 414.5 507 412.5 L286 354.2 Q270.5 350 270 338 Z" fill="#a9a9a9"/>
<!-- top surface navy -->
<path d="M296 187.5 L301 178 L408 181 L536 192.5 L541 204 L536 214 L531 211 L477 210.5 L410 200.5 L345 195 Z" fill="#0b2138"/>
<!-- top front edge highlight -->
<path d="M409 197 L477 208.5 L477 211 L409 199.5 Z" fill="#c6c6c6"/>
<!-- side: black band + door -->
<defs><linearGradient id="gBand" x1="0" x2="0" y1="0" y2="1"><stop offset="0" stop-color="#0b2138"/><stop offset=".12" stop-color="#06101c"/><stop offset=".3" stop-color="#000"/></linearGradient></defs>
<path d="M527 204 L547 205 Q558 207 558 222 L558 386 L544 386 L544 232 Q543 219 529 214 Z" fill="url(#gBand)"/>
<path d="M557 258 L571.5 254 L571.5 376 L557 386 Z" fill="#000"/>
<!-- black body front -->
<path d="M266.8 225 L335 240 L420 262 L418 216 L452 216 Q460 217 462 224 L470 222 L497 268 L505 272 L521.5 276 Q544 276 544 262 L544 380 L536.5 386 Q528 392 518 390 L433 371.5 L269.6 328.5 Z" fill="#000"/>
<!-- bottom plate shadow -->
<path d="M298 336 L395 361.5 L420 381 L433 372 L433 393.5 L298 357.5 Z" fill="#7c7c7c"/>
<!-- top plate right bulge -->
<path d="M497 212 L531 211.5 Q544 213 544 226 L544 262 Q543 276 522 276 L505 272 L495 267 Q505 250 503 230 Z" fill="#ababab"/>
<!-- knob -->
<defs><linearGradient id="gKnob" x1="0" x2="0" y1="0" y2="1"><stop offset="0" stop-color="#0b2138"/><stop offset=".45" stop-color="#03080f"/><stop offset=".7" stop-color="#000"/></linearGradient></defs>
<path d="M463.4 229.5 A19.3 19.3 0 0 1 502 229.5 Q502 250 491.6 270 L463.4 262 Z" fill="url(#gKnob)"/>
<circle cx="481" cy="234" r="13" fill="#878787"/>
<circle cx="519" cy="227.5" r="6" fill="#c9c9c9"/>
<!-- window frame -->
<path d="M412 212 L460 219 L461 226 L414 214 L414 258 L412 258 Z" fill="#c0c0c0"/>
<!-- viewfinder -->
<path d="M280.2 207.3 L332.6 216.7 L332.6 231.6 L281 220.4 Z" fill="#000"/>
<ellipse cx="372.4" cy="219.7" rx="8.4" ry="9.8" fill="#000" transform="rotate(-8 372.4 219.7)"/>
<path d="M356.6 198 L356.6 228 Q356.6 232.5 361 233.5 L408 241.5 Q412.4 242 412.5 238 L412.6 214 Q412.5 208 407 206" fill="none" stroke="#5a5a5a" stroke-width="1"/>
<!-- door frame -->
<path d="M543 379.5 L565.5 368.5 L565.5 380 L543 391.5 Z" fill="#a9a9a9"/>
<path d="M546.8 381.6 L559.8 375.2 L559.8 379.4 L546.8 385.8 Z" fill="#111" stroke="#cfcfcf" stroke-width=".6"/>
<path d="M538.4 264.8 L566.4 255.2 L567.4 258 L543.4 266.4 L542.4 390 L535.8 392 Z" fill="#9c9c9c"/>
<path d="M540.6 266.5 L539.6 390" stroke="#c4c4c4" stroke-width=".8" fill="none"/>
<path d="M566.4 256 L565.4 373" fill="none" stroke="#a4a4a4" stroke-width="1.6"/>
<!-- hot shoe -->
<path d="M421 190 L452 182 L486 189 L458 198 Z" fill="#adadad"/>
<path d="M418 187.6 L450.5 179.2 L452.6 180.4 L420.4 189.2 Z" fill="#cfcfcf" stroke="#777" stroke-width=".5"/>
<path d="M418 187.6 L420.4 189.2 L420.4 193.4 L418 191.8 Z" fill="#9a9a9a"/>
<path d="M420.4 189.2 L452.6 180.4 L452.6 183.4 L420.4 192.4 Z" fill="#bdbdbd" stroke="#777" stroke-width=".5"/>
<path d="M456 194 L488 185.6 L490 187 L458.2 195.8 Z" fill="#cfcfcf" stroke="#777" stroke-width=".5"/>
<path d="M456 194 L458.2 195.8 L458.2 201.4 L456 199.8 Z" fill="#9a9a9a"/>
<path d="M458.2 195.8 L490 187 L490 191 L458.2 201.4 Z" fill="#b4b4b4" stroke="#777" stroke-width=".5"/>
<path d="M420.4 193.4 L456 199.8 L456 196 L421 190 Z" fill="#9c9c9c"/>
<!-- left dial -->
<path d="M300.8 175 L300.8 179.6 A21.5 7.3 0 0 0 343.8 179.6 L343.8 175 Z" fill="#c2c2c2" stroke="#666" stroke-width=".6"/>
<path d="M340 172 L357 171 L396 175.5 L396 180 L357 185.5 L340 184Z" fill="#d2d2d2" stroke="#777" stroke-width=".6"/>
<ellipse cx="322.3" cy="175" rx="21.5" ry="7.3" fill="#dedede" stroke="#888" stroke-width=".6"/>
<!-- shutter button -->
<ellipse cx="349" cy="195" rx="12" ry="4.2" fill="#a6a6a6" stroke="#555" stroke-width=".7"/>
<path d="M342 171.5 L342 193 A7.5 2.5 0 0 0 357 193 L357 171.5 Z" fill="#8e8e8e" stroke="#555" stroke-width=".5"/>
<ellipse cx="349.5" cy="171.5" rx="7.5" ry="2.5" fill="#777" stroke="#555" stroke-width=".5"/>
<!-- right dial -->
<path d="M476.6 195.5 L476.6 201.5 A32 8.8 0 0 0 540.6 201.5 L540.6 195.5 Z" fill="#c8c8c8" stroke="#777" stroke-width=".6"/>
<ellipse cx="508.6" cy="195.5" rx="32" ry="8.8" fill="#dcdcdc" stroke="#888" stroke-width=".6"/>
<path d="M486.5 199.4 L514 187 L528.6 189.2 L501 202.4 Z" fill="#efefef" stroke="#888" stroke-width=".6"/><path d="M486.5 199.4 L501 202.4 L501 204.4 L486.5 201.4 Z" fill="#9a9a9a"/><path d="M501 202.4 L528.6 189.2 L528.6 191 L501 204.4 Z" fill="#bdbdbd"/>
<!-- lens -->
<defs>
<linearGradient id="gF0" x1="0" x2="1" y1="0" y2="0"><stop offset="0" stop-color="#3c3c3c"/><stop offset=".35" stop-color="#555"/><stop offset=".75" stop-color="#a8a8a8"/><stop offset="1" stop-color="#c4c4c4"/></linearGradient>
<linearGradient id="gF3" x1="0" x2="1" y1="0" y2="0"><stop offset="0" stop-color="#8c8c8c"/><stop offset=".6" stop-color="#9a9a9a"/><stop offset="1" stop-color="#d0d0d0"/></linearGradient>
<clipPath id="cIn"><ellipse cx="359" cy="302" rx="32" ry="43.5" transform="rotate(-7 358 302)"/></clipPath>
</defs>
<rect x="302.6" y="316" width="7" height="12" rx="1.5" fill="#a8a8a8"/>
<ellipse cx="388" cy="293" rx="46.5" ry="57.5" fill="#b9b9b9" stroke="#444" stroke-width=".8"/>
<ellipse cx="378.6" cy="296" rx="44.4" ry="57.6" fill="#5a5a5a"/>
<g transform="rotate(-7 358 302)">
<ellipse cx="357.2" cy="303" rx="53" ry="61.5" fill="url(#gF0)" stroke="#1c1c1c" stroke-width="1"/>
<ellipse cx="357.4" cy="303.2" rx="49.4" ry="58" fill="#262626"/>
<ellipse cx="358.8" cy="302.4" rx="47.2" ry="56" fill="#9a9a9a"/>
<ellipse cx="359.5" cy="301.6" rx="44.5" ry="53" fill="#dadada"/>
<ellipse cx="359.5" cy="301.6" rx="37.8" ry="47.6" fill="url(#gF3)"/>
<ellipse cx="359.2" cy="301.8" rx="33.4" ry="44.6" fill="#cfcfcf"/>
</g>
<ellipse cx="359" cy="302" rx="32" ry="43.5" fill="#000" transform="rotate(-7 358 302)"/>
<g clip-path="url(#cIn)">
<path d="M326.4 305 L352.4 341 L352 352 L320 352 L320 305 Z" fill="#8a8a8a"/>
<ellipse cx="372" cy="298" rx="29" ry="40" fill="none" stroke="#3a3a3a" stroke-width=".8"/>
<ellipse cx="378" cy="296" rx="27" ry="37" fill="none" stroke="#2c2c2c" stroke-width=".8"/>
</g>
<!-- lens tab -->
<path d="M395 363 L410 350 Q416 345.5 421 347 Q426 351 428 358 L433 374 Q432 380 428 381 L417 382 L405 375 Z" fill="#cfcfcf" stroke="#666" stroke-width=".7"/>
<path d="M421 347 Q426 351 428 358 L433 374 Q432 380 428 381 L424 378 Q427 372 424 364 Q422 354 416 349 Z" fill="#b4b4b4"/>
</g>

<g id="gizmo" fill="none" stroke="#1788f6" stroke-linecap="round" stroke-linejoin="round">
<rect x="309" y="217.6" width="153.4" height="152.2" rx="26" stroke="#1f5aa6" stroke-width=".9" stroke-opacity=".6"/>
<path d="M385.5 369.6 L385.5 391" stroke="#2a6fc9" stroke-width=".8" stroke-opacity=".6"/>
<circle cx="385.8" cy="294.3" r="50.4" stroke-width="3.3"/>
<path d="M385.6 265 L385.6 246 M379.3 252.4 L385.6 245.5 L392 252.4" stroke-width="3.5"/>
<path d="M368.3 291.8 Q368.5 276 379.8 268.6" stroke-width="4.3"/>
<path d="M393.2 268.3 Q406 274 409.2 290" stroke-width="4.3"/>
<path d="M374.5 302.4 Q389 305.5 403 302" stroke-width="4.3"/>
<path d="M366.5 302 L355.5 306 M357 299.3 L355 306.2 L361 311" stroke-width="3.5"/>
<path d="M411 299.8 L425.5 304 M421.5 296.5 L426.2 304.3 L422.4 308.5" stroke-width="3.5"/>
<circle cx="385.7" cy="294.4" r="3.6" fill="#9a9a9a" stroke="#e0e0e0" stroke-width="1"/>
<path d="M382.2 230.3 L388.2 230.3 L389.6 231.8 L389.6 238.4 L380.8 238.4 L380.8 231.8 Z" fill="#fff" stroke="#4a90e2" stroke-width=".8"/>
<rect x="433.3" y="302.4" width="7.2" height="7.2" fill="#fff" stroke="#cfe0f5" stroke-width=".6"/>
<path d="M346.6 305.6 L350.4 307.8 L350.4 312.2 L346.6 314.4 L342.8 312.2 L342.8 307.8 Z" fill="#c4d8f2" stroke="#3f8ae8" stroke-width="1"/>
<rect x="458.2" y="215" width="7" height="7" fill="#fff" stroke="#1f87f2" stroke-width="1.4"/>
<circle cx="309.6" cy="369.6" r="3.6" fill="#a9c8ee" stroke="#1f87f2" stroke-width="1.6"/>
<circle cx="385.5" cy="391" r="3.6" fill="#fff" stroke="#1f87f2" stroke-width="1.6"/>
</g>
<rect x="362.2" y="191.4" width="47.8" height="20.2" rx="9.8" fill="#0b6ce0"/>
<text x="377.4" y="204.2" font-family="Liberation Sans, sans-serif" font-weight="bold" font-size="9.3" fill="#fff" textLength="16.8" lengthAdjust="spacingAndGlyphs">Edit</text>
</svg>
<svg id="icons" width="1000" height="562" viewBox="0 0 1000 562" fill="none" stroke="#2c2c2c" stroke-width="1.2" stroke-linecap="round" stroke-linejoin="round">
<!-- TOPBAR icons -->
<g id="cloud" stroke="none" fill="#2c2c2c">
<path d="M142.5 17.6 Q140.2 17.4 140.3 15.3 Q140.5 13.5 142.4 13.4 Q142.8 11 145.3 10.7 Q147.6 10.6 148.4 12.6 Q150.4 12.5 150.7 14.4 L148 17.6 Z"/>
<circle cx="149.6" cy="16" r="2.3" fill="#2c2c2c" stroke="#f8f8f8" stroke-width=".8"/>
</g>
<g id="eye1" stroke="#333" stroke-width="1">
<path d="M184.8 14.6 Q189.4 9.6 194 14.6 Q189.4 19.6 184.8 14.6 Z"/>
<circle cx="189.6" cy="14.4" r="1.9" fill="#333" stroke="none"/>
</g>
<g id="undo" stroke-width="1.4">
<path d="M709.6 10.2 L706.8 12.8 L709.6 15.4 M707 12.8 L713.6 12.8 Q716.6 13 716.6 15.6 Q716.6 18.2 713.6 18.2 L711.4 18.2"/>
<path d="M739.9 10.2 L742.7 12.8 L739.9 15.4 M742.5 12.8 L735.9 12.8 Q732.9 13 732.9 15.6 Q732.9 18.2 735.9 18.2 L738.1 18.2"/>
</g>
<g id="mouse" stroke="#555" stroke-width="1">
<rect x="761.2" y="9.7" width="6.6" height="9.8" rx="3.3"/>
<path d="M764.5 11.8 L764.5 14"/>
<path d="M772.6 20.2 L772.6 22.4 L770.4 22.4 Z" fill="#333" stroke="none"/>
</g>
<g id="snap" stroke="#fff" stroke-width="1.1">
<path d="M785.2 8.8 L788.4 12"/>
<path d="M791.2 10.8 A3.6 3.6 0 1 1 794 16.8"/>
<path d="M791.8 13.2 A1.4 1.4 0 1 1 793.6 14.8"/>
<rect x="786" y="15" width="4.6" height="4.6"/>
<path d="M793 17.4 L796 20.6 M787.5 11.5 L786 13"/>
</g>
<g id="user" stroke-width="1">
<circle cx="824" cy="14.4" r="5.2"/>
<circle cx="824" cy="12.8" r="1.8"/>
<path d="M820.6 18 Q821 15.8 824 15.8 Q827 15.8 827.4 18"/>
</g>
<g id="flask" stroke-width="1.1">
<path d="M972.4 9.6 L976.4 9.6 M973.2 9.8 L973.2 13.4 L970.4 18 Q970 19.2 971.2 19.3 L977.6 19.3 Q978.8 19.2 978.4 18 L975.6 13.4 L975.6 9.8 M971.6 16.2 L977.2 16.2"/>
</g>

<!-- LEFT TOOLBAR icons -->
<path d="M12.4 45.4 L12.4 56 L15.4 53.2 L20.6 51.6 Z" stroke="#fff" stroke-width="1.2" fill="none"/>
<g id="pen">
<path d="M10.6 79.4 L19.6 71.4" stroke-width="1.3"/>
<circle cx="15.3" cy="75.2" r="1.5" fill="#2c2c2c" stroke="none"/>
<path d="M17.2 77 L17.2 82.8 L21.8 80 Z" stroke-width="1.1"/>
</g>
<g id="cube" stroke-width="1.1">
<path d="M16 97.8 L20.6 100.4 L20.6 105.4 L16 108 L11.4 105.4 L11.4 100.4 Z M11.6 100.5 L16 103 L20.4 100.5 M16 103 L16 107.8"/>
<path d="M23.4 109 L23.4 111 L21.4 111 Z" fill="#2c2c2c" stroke="none"/>
</g>
<g id="T" stroke-width="1.2">
<path d="M12.2 126.2 L12.2 125 L19.8 125 L19.8 126.2 M16 125 L16 134.6 M14.4 134.8 L17.6 134.8"/>
</g>
<g id="hand" stroke-width="1">
<path d="M13.6 163.4 L13.6 160 Q14.4 158.8 15.2 160 L15.2 158.6 Q16 157.4 16.9 158.6 L16.9 159.2 Q17.8 158.2 18.6 159.4 L18.6 160.6 Q19.6 159.8 20.2 161 L20.2 164.6 Q20 167.6 16.8 167.8 Q14.6 167.8 13.4 166 L11.4 163 Q11.4 161.6 13.6 163.4"/>
</g>
<g id="search" stroke-width="1.2">
<circle cx="14.8" cy="188.2" r="3.8"/>
<path d="M17.6 191 L20.6 194"/>
</g>
<g id="blob" stroke-width="1">
<path d="M13.4 212 Q15.6 211.4 15.8 213.6 Q16.4 211 19 211.6 Q21 212.6 20 214.6 Q22.4 216.4 21 218.8 Q19.4 220.2 17.6 219.4"/>
<path d="M15.8 213.6 Q15.6 215.6 13.4 216 Q11.8 217.4 12.8 218.6 M13.4 212 Q11 212.6 11.2 215 Q11.6 216.6 13.4 216"/>
<path d="M13.4 217.2 L12.6 219 L14.6 218.6" stroke-width=".9"/>
</g>
<path d="M11 146.3 L21 146.3 M11 232.3 L21 232.3" stroke="#ececec" stroke-width="1"/>

<!-- CANVAS TOP-LEFT buttons -->
<g id="camicon" stroke="#444" stroke-width="1">
<path d="M44 48.2 Q44 47.2 45 47.2 L46.6 47.2 L47.4 46.1 L50.4 46.1 L51.2 47.2 L52.8 47.2 Q53.8 47.2 53.8 48.2 L53.8 53 Q53.8 54 52.8 54 L45 54 Q44 54 44 53 Z"/>
<circle cx="48.9" cy="50.5" r="2"/>
<path d="M58.6 49.8 L60.4 51.6 L62.2 49.8"/>
</g>
<g id="styles" stroke="#444" stroke-width="1">
<circle cx="82.4" cy="51.4" r="3"/>
<circle cx="85.6" cy="49" r="3"/>
<circle cx="133.6" cy="50.2" r="2.7"/>
<path d="M133.6 45.4 L133.6 46.2 M133.6 54.2 L133.6 55 M128.8 50.2 L129.6 50.2 M137.6 50.2 L138.4 50.2 M130.2 46.8 L130.8 47.4 M136.4 53 L137 53.6 M130.2 53.6 L130.8 53 M136.4 47.4 L137 46.8"/>
<path d="M122.4 46 L122.4 55" stroke="#e4e4e4"/>
</g>

<!-- CANVAS TOP-CENTER controls -->
<g id="fs" stroke="#e6e6e6" stroke-width="1.2">
<path d="M346.2 49 L346.2 46.8 L349.4 46.8 M353.6 46.8 L356.8 46.8 L356.8 49 M356.8 52 L356.8 54.2 L353.6 54.2 M349.4 54.2 L346.2 54.2 L346.2 52"/>
</g>
<g id="hslider" stroke="#e6e6e6">
<path d="M382.4 50.3 L373.6 50.3 M377 46.9 L373.4 50.3 L377 53.7" stroke-width="1.3"/>
<path d="M448.6 50.3 L457.2 50.3 M453.8 46.9 L457.4 50.3 L453.8 53.7" stroke-width="1.3"/>
<path d="M389.4 43 L389.4 58 M441.9 43 L441.9 58" stroke="#777" stroke-width=".8"/>
<path d="M394.2 48 L394.2 52.6 M400.6 48 L400.6 52.6 M407 48 L407 52.6 M419.8 48 L419.8 52.6 M426.2 48 L426.2 52.6 M432.6 48 L432.6 52.6" stroke="#8a8a8a" stroke-width="1"/>
<path d="M413.4 46.6 L413.4 54" stroke="#ddd" stroke-width="1.2"/>
<path d="M439.8 45.4 L439.8 55.2" stroke="#f0f0f0" stroke-width="1.4"/>
</g>
<g id="c3d" stroke="#e6e6e6" stroke-width="1">
<path d="M478 46.4 L481.8 48.6 L481.8 53 L478 55.2 L474.2 53 L474.2 48.6 Z M474.4 48.7 L478 50.8 L481.6 48.7 M478 50.8 L478 55"/>
<path d="M483.2 44.8 L483.2 46.8 M482.2 45.8 L484.2 45.8" stroke-width=".8"/>
</g>

<!-- VERTICAL SLIDER -->
<g id="vslider" stroke="#e6e6e6">
<path d="M48.9 265.4 L48.9 256.4 M45.5 259.8 L48.9 256.2 L52.3 259.8" stroke-width="1.3"/>
<path d="M48.9 331.4 L48.9 340.4 M45.5 337 L48.9 340.6 L52.3 337" stroke-width="1.3"/>
<path d="M41 271.5 L57 271.5 M41 324.7 L57 324.7" stroke="#777" stroke-width=".8"/>
<path d="M44.6 273.6 L53.2 273.6" stroke="#f0f0f0" stroke-width="1.4"/>
<path d="M46.4 279.6 L51.4 279.6 M46.4 286 L51.4 286 M46.4 292.3 L51.4 292.3 M46.4 305.7 L51.4 305.7 M46.4 312.2 L51.4 312.2 M46.4 318.8 L51.4 318.8" stroke="#8a8a8a" stroke-width="1"/>
<path d="M45.4 298.8 L52.4 298.8" stroke="#ddd" stroke-width="1.3"/>
</g>

<!-- RIGHT PANEL icons -->
<g id="shapeicon" stroke="#222" stroke-width="1.5">
<circle cx="816.6" cy="78.4" r="6.5"/>
<path d="M820.6 77.6 Q820.8 81.6 816.6 82.4" stroke-width="1.1"/>
</g>
<g id="appicon" stroke="#333" stroke-width="1">
<path d="M884 155 A4.9 4.9 0 1 0 879 161.4"/>
<circle cx="877.6" cy="155" r=".9" stroke-width=".8"/>
<circle cx="881.6" cy="159.4" r="2.3" fill="#333" stroke="none"/>
<path d="M880.4 159.4 L882.8 159.4 M881.6 158.2 L881.6 160.6" stroke="#f8f8f8" stroke-width=".7"/>
</g>
<g id="chevs" stroke="#333" stroke-width="1.2"><path d="M977 157 L980.8 161 L984.6 157"/><path d="M977 299.3 L980.8 303.3 L984.6 299.3"/><path d="M977 473.3 L980.8 477.3 L984.6 473.3"/></g>
<g id="extr" stroke="#fff" stroke-width="1">
<path d="M871 498.6 L871 502.6 A3 1.3 0 0 0 877 502.6 L877 498.6 M877 498.6 A3 1.3 0 0 1 871 498.6 A3 1.3 0 0 1 877 498.6"/>
<path d="M878 497.6 L880.6 495.4 M878.6 495.2 L880.8 495.2 L880.8 497.4" stroke-width=".9"/>
</g>
<g id="revo" stroke="#333" stroke-width="1">
<path d="M934 499.4 L934 502.8 A3 1.3 0 0 0 940 502.8 L940 499.4 M940 499.4 A3 1.3 0 0 1 934 499.4 A3 1.3 0 0 1 940 499.4"/>
<path d="M937.4 497.4 L937.4 495.6 Q940.4 493.4 943.2 495.8 Q944.4 497.4 942.6 499 M939.4 494.2 L937.2 495.6 L939 497.4" stroke-width=".9"/>
</g>

<!-- LAYER PANEL -->
<g id="layers">
<path d="M756 193.6 L756 185.4 M752.6 188.6 L756 185 L759.4 188.6 M771.6 185 L771.6 193.2 M768.2 190 L771.6 193.6 L775 190" stroke="#222" stroke-width="1.3"/>
<path d="M757.5 199.8 L763.8 205.4 L770 199.8 M763.8 199 L763.8 205" stroke="#b8b8b8" stroke-width="1"/>
<path d="M758.5 224.5 L758.5 235.5 A4.8 2 0 0 0 768.0999999999999 235.5 L768.0999999999999 224.5 Z" fill="#d2d2d2" stroke="#555" stroke-width=".8"/><ellipse cx="763.3" cy="224.5" rx="4.8" ry="2" fill="#d2d2d2" stroke="#555" stroke-width=".8"/>
<path d="M758.5 256 L758.5 267 A4.8 2 0 0 0 768.0999999999999 267 L768.0999999999999 256 Z" fill="#d2d2d2" stroke="#555" stroke-width=".8"/><ellipse cx="763.3" cy="256" rx="4.8" ry="2" fill="#d2d2d2" stroke="#555" stroke-width=".8"/>
<circle cx="764" cy="293.6" r="6.8" fill="#000" stroke="none"/>
<circle cx="764" cy="325.2" r="7" fill="#000" stroke="none"/>
<path d="M758.3 351.3 L758.3 362.2 A5.1 2 0 0 0 768.5 362.2 L768.5 351.3 Z" fill="#8c8c8c" stroke="#555" stroke-width=".8"/><ellipse cx="763.4" cy="351.3" rx="5.1" ry="2" fill="#8c8c8c" stroke="#555" stroke-width=".8"/>
<defs><linearGradient id="gStar" x1="0" x2="0" y1="0" y2="1"><stop offset="0" stop-color="#6e6e6e"/><stop offset="1" stop-color="#dcdcdc"/></linearGradient></defs>
<path d="M757 384 L758.5 387 L759.5 390 L763 388.5 L766 390 L768 388.5 L770.5 386.5 L770.3 392.6 L767.8 394.6 L766 395.8 L763 394.4 L759.6 395.8 L757.6 393 Z" fill="url(#gStar)" stroke="none"/>
<path d="M757 384 L760.5 383.5 L762.3 381.3 L764.5 383 L768.5 382.5 L768 385 L770.5 386.5 L768 388.5 L766 390 L763 388.5 L759.5 390 L758.5 387 Z" fill="#8e8e8e" stroke="#3a3a3a" stroke-width=".7"/>
<path d="M759.5 390 L759.6 395.6 M763 388.5 L763 394.2 M766 390 L766 395.6" stroke="#777" stroke-width=".5"/>
<path d="M759.4 406.2h1.5v1.5h-1.5z M763.2 406.2h1.5v1.5h-1.5z M767 406.2h1.5v1.5h-1.5z" fill="#111" stroke="none"/>
</g>

<!-- BOTTOM BAR icons -->
<g id="bb" stroke="#333" stroke-width="1">
<path d="M291 538.2 L300.4 530" stroke-width="1.3"/>
<circle cx="296" cy="533.8" r="1.5" fill="#2c2c2c" stroke="none"/>
<path d="M297.6 535.4 L297.6 541 L302.2 538.2 Z" stroke-width="1.1"/>
<rect x="373.6" y="532.4" width="7.4" height="7.6" rx="1.2"/>
<path d="M371.6 537.6 L371.6 531.4 Q371.6 530.2 372.8 530.2 L378.6 530.2 M377.3 534.2 L377.3 538.2 M375.3 536.2 L379.3 536.2"/>
<path d="M397.4 535.2 Q402.6 529.8 407.8 535.2 Q402.6 540.6 397.4 535.2 Z"/>
<circle cx="402.8" cy="535" r="2" fill="#333" stroke="none"/>
<path d="M424.8 531.8 L434.2 531.8 M427.6 531.6 L427.8 529.8 L431.2 529.8 L431.4 531.6 M425.8 532 L426.4 539.6 Q426.5 540.6 427.6 540.6 L431.4 540.6 Q432.5 540.6 432.6 539.6 L433.2 532 M428.3 534 L428.3 538.4 M430.7 534 L430.7 538.4"/>
<path d="M450 533.4 L450 530.8 L453 530.8 M458.6 530.8 L461.6 530.8 L461.6 533.4 M461.6 537 L461.6 539.6 L458.6 539.6 M453 539.6 L450 539.6 L450 537"/>
<circle cx="455.8" cy="535.2" r="2.6"/>
<path d="M487.4 534.4 A5.4 5.4 0 1 0 482.6 540.6"/>
<circle cx="480.6" cy="533.4" r="1" stroke-width=".8"/>
<path d="M484.6 534.6 L487.4 536 L487.4 538.6 L484.8 540 L482.4 538.6 L482.4 536 Z" stroke="#777" stroke-width=".8"/>
<path d="M513.6 533.2 A5.4 5.4 0 1 0 507.4 540.4"/>
<circle cx="506.6" cy="533.2" r="1" stroke-width=".8"/>
<rect x="509.2" y="535.6" width="4.8" height="4.6" rx=".6" stroke-width=".9"/>
<path d="M510.4 535.4 L510.4 534.4 Q511.6 533.2 512.8 534.4 L512.8 535.4" stroke-width=".8"/>
<circle cx="539.8" cy="535.2" r="1" fill="#222" stroke="none"/><circle cx="543.6" cy="535.2" r="1" fill="#222" stroke="none"/><circle cx="547.4" cy="535.2" r="1" fill="#222" stroke="none"/>
</g>
</svg>
<svg id="labels" width="1000" height="562" viewBox="0 0 1000 562">
<text x="8.1" y="18.8" font-size="13" font-weight="bold" fill="#1473e6" textLength="15.7" lengthAdjust="spacingAndGlyphs">Ne</text>
<text x="32.0" y="18.4" font-size="9.3" font-weight="normal" fill="#555" textLength="23.2" lengthAdjust="spacingAndGlyphs">(Beta)</text>
<text x="88.0" y="18.4" font-size="9.3" font-weight="normal" fill="#555" textLength="42.3" lengthAdjust="spacingAndGlyphs">Demi EE17</text>
<text x="198.2" y="18.0" font-size="9.2" font-weight="normal" fill="#2c2c2c" textLength="35.0" lengthAdjust="spacingAndGlyphs">View only</text>
<text x="851.8" y="17.2" font-size="9.5" font-weight="bold" fill="#b9b9b9" textLength="23.6" lengthAdjust="spacingAndGlyphs">Share</text>
<text x="903.9" y="17.2" font-size="9.5" font-weight="bold" fill="#b9b9b9" textLength="43.4" lengthAdjust="spacingAndGlyphs">Download</text>
<text x="94.2" y="53.2" font-size="9.2" font-weight="normal" fill="#333" textLength="20.7" lengthAdjust="spacingAndGlyphs">Styles</text>
<text x="216.8" y="93.0" font-size="9.8" font-weight="normal" fill="#f4e6e6" textLength="56.0" lengthAdjust="spacingAndGlyphs">8000 x 8000</text>
<text x="806.2" y="55.0" font-size="13" font-weight="bold" fill="#222" textLength="57.4" lengthAdjust="spacingAndGlyphs">Properties</text>
<text x="838.0" y="81.6" font-size="9.6" font-weight="normal" fill="#333" textLength="39.0" lengthAdjust="spacingAndGlyphs">unnamed</text>
<text x="811.0" y="108.7" font-size="9" font-weight="normal" fill="#222" textLength="42.5" lengthAdjust="spacingAndGlyphs">Appearance</text>
<text x="868.6" y="108.7" font-size="9" font-weight="normal" fill="#222" textLength="31.4" lengthAdjust="spacingAndGlyphs">Combine</text>
<text x="915.6" y="108.7" font-size="9" font-weight="normal" fill="#222" textLength="21.4" lengthAdjust="spacingAndGlyphs">Shape</text>
<text x="952.0" y="108.7" font-size="9" font-weight="normal" fill="#222" textLength="36.0" lengthAdjust="spacingAndGlyphs">Transform</text>
<text x="811.0" y="129.2" font-size="9" font-weight="normal" fill="#222" textLength="24.6" lengthAdjust="spacingAndGlyphs">Repeat</text>
<text x="814.8" y="160.7" font-size="10" font-weight="bold" fill="#222" textLength="51.2" lengthAdjust="spacingAndGlyphs">Appearance</text>
<text x="814.8" y="185.2" font-size="9.5" font-weight="normal" fill="#444" textLength="20.0" lengthAdjust="spacingAndGlyphs">Color</text>
<text x="814.8" y="211.4" font-size="9.5" font-weight="normal" fill="#c6c6c6" textLength="52.0" lengthAdjust="spacingAndGlyphs">Highlight Size</text>
<text x="956.0" y="225.5" font-size="9.5" font-weight="normal" fill="#c6c6c6" textLength="11.4" lengthAdjust="spacingAndGlyphs">0.2</text>
<text x="814.8" y="250.6" font-size="9.5" font-weight="normal" fill="#444" textLength="69.2" lengthAdjust="spacingAndGlyphs">Highlight Intensity</text>
<text x="956.0" y="264.2" font-size="9.5" font-weight="normal" fill="#333" textLength="11.4" lengthAdjust="spacingAndGlyphs">0.2</text>
<text x="814.8" y="303.5" font-size="10" font-weight="bold" fill="#222" textLength="70.5" lengthAdjust="spacingAndGlyphs">Combine shapes</text>
<text x="814.8" y="324.0" font-size="9.5" font-weight="normal" fill="#444" textLength="31.2" lengthAdjust="spacingAndGlyphs">Additive</text>
<text x="821.2" y="348.8" font-size="9.6" font-weight="bold" fill="#fff" textLength="17.4" lengthAdjust="spacingAndGlyphs">Add</text>
<text x="857.5" y="348.8" font-size="9.6" font-weight="normal" fill="#222" textLength="21.9" lengthAdjust="spacingAndGlyphs">Color</text>
<text x="898.6" y="348.8" font-size="9.6" font-weight="normal" fill="#222" textLength="22.9" lengthAdjust="spacingAndGlyphs">Repel</text>
<text x="940.7" y="348.8" font-size="9.6" font-weight="normal" fill="#222" textLength="23.5" lengthAdjust="spacingAndGlyphs">Avoid</text>
<text x="814.8" y="374.2" font-size="9.5" font-weight="normal" fill="#444" textLength="41.9" lengthAdjust="spacingAndGlyphs">Subtractive</text>
<text x="821.5" y="399.3" font-size="9.6" font-weight="normal" fill="#222" textLength="23.7" lengthAdjust="spacingAndGlyphs">Carve</text>
<text x="864.2" y="399.3" font-size="9.6" font-weight="normal" fill="#222" textLength="35.8" lengthAdjust="spacingAndGlyphs">Intersect</text>
<text x="814.8" y="424.0" font-size="9.5" font-weight="normal" fill="#444" textLength="33.1" lengthAdjust="spacingAndGlyphs">Blending</text>
<text x="955.6" y="437.8" font-size="9.5" font-weight="normal" fill="#333" textLength="4.7" lengthAdjust="spacingAndGlyphs">0</text>
<text x="814.8" y="477.0" font-size="9.8" font-weight="bold" fill="#222" textLength="26.4" lengthAdjust="spacingAndGlyphs">Shape</text>
<text x="814.7" y="502.4" font-size="9.5" font-weight="normal" fill="#444" textLength="29.3" lengthAdjust="spacingAndGlyphs">3D type</text>
<text x="887.5" y="502.3" font-size="9.6" font-weight="bold" fill="#fff" textLength="31.7" lengthAdjust="spacingAndGlyphs">Extrude</text>
<text x="949.7" y="502.3" font-size="9.6" font-weight="bold" fill="#222" textLength="32.9" lengthAdjust="spacingAndGlyphs">Revolve</text>
<text x="814.7" y="527.5" font-size="9.5" font-weight="normal" fill="#444" textLength="56.3" lengthAdjust="spacingAndGlyphs">Bottom Corner</text>
<text x="955.6" y="540.9" font-size="9.5" font-weight="normal" fill="#333" textLength="21.9" lengthAdjust="spacingAndGlyphs">0.128</text>
<text x="814.7" y="567.0" font-size="9.5" font-weight="normal" fill="#444" textLength="43.3" lengthAdjust="spacingAndGlyphs">Top Corner</text>
<text x="307.5" y="539.0" font-size="10" font-weight="bold" fill="#222" textLength="44.7" lengthAdjust="spacingAndGlyphs">Edit shape</text>
</svg>
</body></html>
